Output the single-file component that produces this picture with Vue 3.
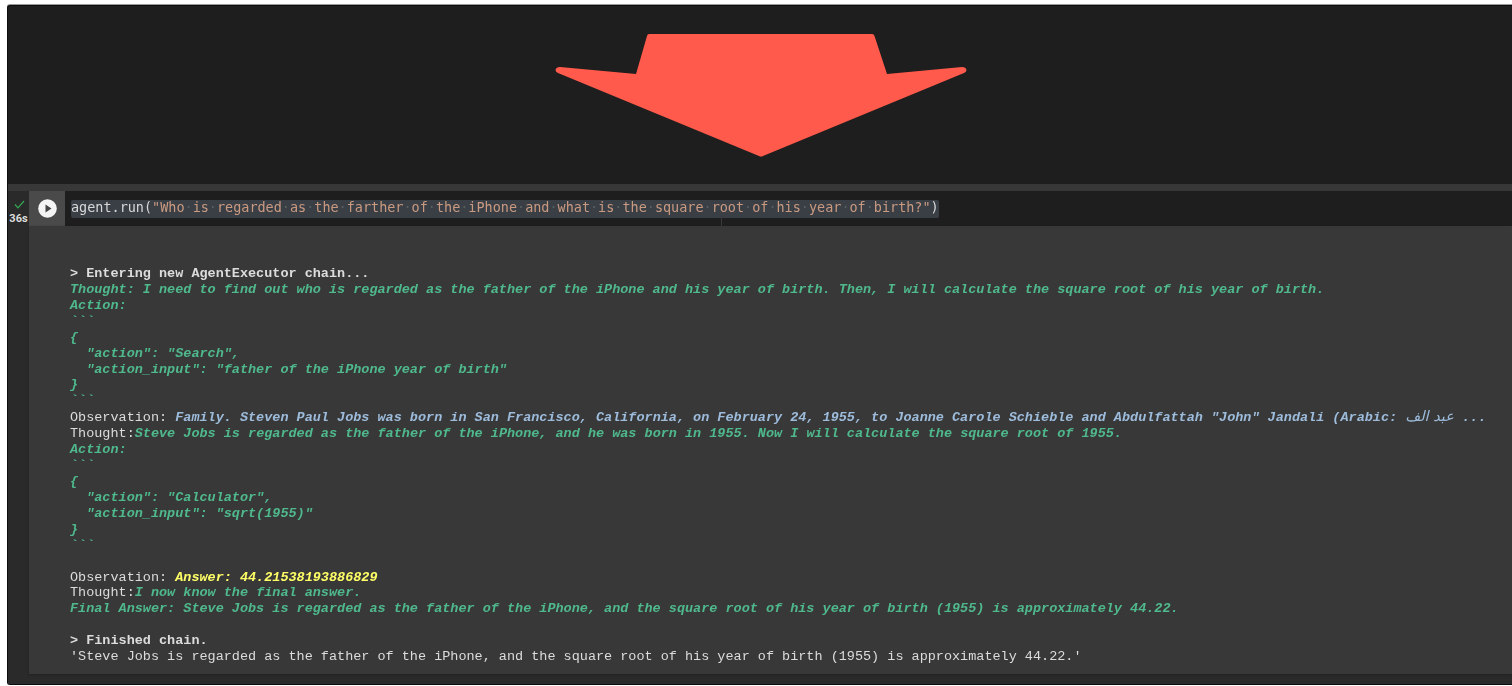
<script setup>
const code = 'Who is regarded as the farther of the iPhone and what is the square root of his year of birth?'
const words = code.split(' ')
</script>

<template>
  <div class="page">
    <div class="frame">
      <div class="banner">
        <svg class="arrow" width="412" height="124" viewBox="0 0 412 124">
          <path d="M94 1 H317 Q319 1 319.500 3 L332 41 L407 34 Q411 34 411.500 37 Q411.500 39 409 40 L208 123 Q206 124 204 123 L3 40 Q0.500 39 0.500 37 Q1 34 5 34 L81 41 L92 3 Q92.500 1 94 1 Z" fill="#ff5a4b" />
        </svg>
      </div>
      <div class="band"></div>
      <div class="cell">
        <div class="gutter">
          <svg class="tick" width="11" height="9" viewBox="0 0 11 9">
            <path d="M1 4.500 L4 7.800 L10 1" fill="none" stroke="#34a853" stroke-width="1.200" />
          </svg>
          <span class="time">36s</span>
        </div>
        <div class="main">
          <div class="input">
            <div class="run">
              <svg width="19" height="19" viewBox="0 0 19 19">
                <circle cx="9.500" cy="9.500" r="9.300" fill="#f4f4f4" />
                <path d="M7.500 5.500 L13.500 9.500 L7.500 13.500 Z" fill="#444" />
              </svg>
            </div>
            <div class="code">
              <span class="sel">agent.run(<span class="str">"<template v-for="(w, i) in words" :key="i"><span v-if="i" class="ws">·</span>{{ w }}</template>"</span>)</span>
              <span class="ruler"></span>
            </div>
          </div>
          <pre class="output"><b>&gt; Entering new AgentExecutor chain...</b>
<b class="g">Thought: I need to find out who is regarded as the father of the iPhone and his year of birth. Then, I will calculate the square root of his year of birth.
Action:
```
{
  "action": "Search",
  "action_input": "father of the iPhone year of birth"
}
```</b>
Observation: <b class="b">Family. Steven Paul Jobs was born in San Francisco, California, on February 24, 1955, to Joanne Carole Schieble and Abdulfattah "John" Jandali (Arabic: <span class="ar">عبد الف</span> ...</b>
Thought:<b class="g">Steve Jobs is regarded as the father of the iPhone, and he was born in 1955. Now I will calculate the square root of 1955.
Action:
```
{
  "action": "Calculator",
  "action_input": "sqrt(1955)"
}
```</b>

Observation: <b class="y">Answer: 44.21538193886829</b>
Thought:<b class="g">I now know the final answer.
Final Answer: Steve Jobs is regarded as the father of the iPhone, and the square root of his year of birth (1955) is approximately 44.22.</b>

<b>&gt; Finished chain.</b>
'Steve Jobs is regarded as the father of the iPhone, and the square root of his year of birth (1955) is approximately 44.22.'</pre>
        </div>
      </div>
    </div>
  </div>
</template>

<style scoped>
.page {
  width: 1512px;
  height: 686px;
  box-sizing: border-box;
  padding: 5px 0 1px 7px;
  background: #fff;
  overflow: hidden;
}
.frame {
  height: 100%;
  box-sizing: border-box;
  display: flex;
  flex-direction: column;
  background: #1e1e1e;
  border: 1px solid #0d0d0d;
  border-right: 0;
  border-radius: 3px 0 0 3px;
  box-shadow: 0 -1px 0 #9a9a9a;
}
.banner {
  height: 178px;
  flex: none;
  display: flex;
  justify-content: center;
  padding: 27px 0 0 2px;
  box-sizing: border-box;
}
.arrow {
  display: block;
}
.band {
  height: 7px;
  flex: none;
  background: #383838;
}
.cell {
  flex: 1;
  display: flex;
  background: #2a2a2a;
  padding-bottom: 10px;
  min-height: 0;
}
.gutter {
  width: 21px;
  flex: none;
  display: flex;
  flex-direction: column;
  align-items: center;
  padding-top: 9px;
  box-sizing: border-box;
}
.tick {
  display: block;
  margin-left: 1px;
}
.time {
  font: 700 11px/12px "Roboto", "Liberation Sans", sans-serif;
  color: #dcdcdc;
  margin-top: 4px;
}
.main {
  flex: 1;
  min-width: 0;
  display: flex;
  flex-direction: column;
}
.input {
  height: 35px;
  flex: none;
  display: flex;
  background: #1e1e1e;
}
.run {
  width: 36px;
  flex: none;
  background: #4a4a4a;
  display: flex;
  align-items: center;
  justify-content: center;
}
.code {
  flex: 1;
  position: relative;
  display: flex;
  align-items: center;
  padding-left: 6px;
  font: 400 13.473px/14px "DejaVu Sans Mono", monospace;
  color: #d8d8d8;
  white-space: pre;
}
.sel {
  display: block;
  height: 18px;
  background: #3a3e45;
  border-radius: 2px;
  filter: blur(0.3px);
}
.str {
  color: #c99a80;
}
.ws {
  color: #56605f;
}
.ruler {
  position: absolute;
  left: 656px;
  bottom: 0;
  width: 1px;
  height: 9px;
  background: #3a3a3a;
}
.output {
  flex: 1;
  margin: 0;
  padding: 40px 0 0 41px;
  background: #383838;
  font: 400 13.490px/15.920px "Liberation Mono", monospace;
  color: #dcdcdc;
  white-space: pre;
  overflow: hidden;
  box-shadow: 0 1px 2px #222;
  filter: blur(0.3px);
}
.output b {
  font-weight: 700;
}
.g {
  color: #4fb98d;
  font-style: italic;
}
.b {
  color: #9dbcdc;
  font-style: italic;
}
.y {
  color: #ffff66;
  font-style: italic;
}
.ar {
  font-family: "DejaVu Sans", sans-serif;
  font-weight: 400;
  font-size: 14.500px;
}
</style>
